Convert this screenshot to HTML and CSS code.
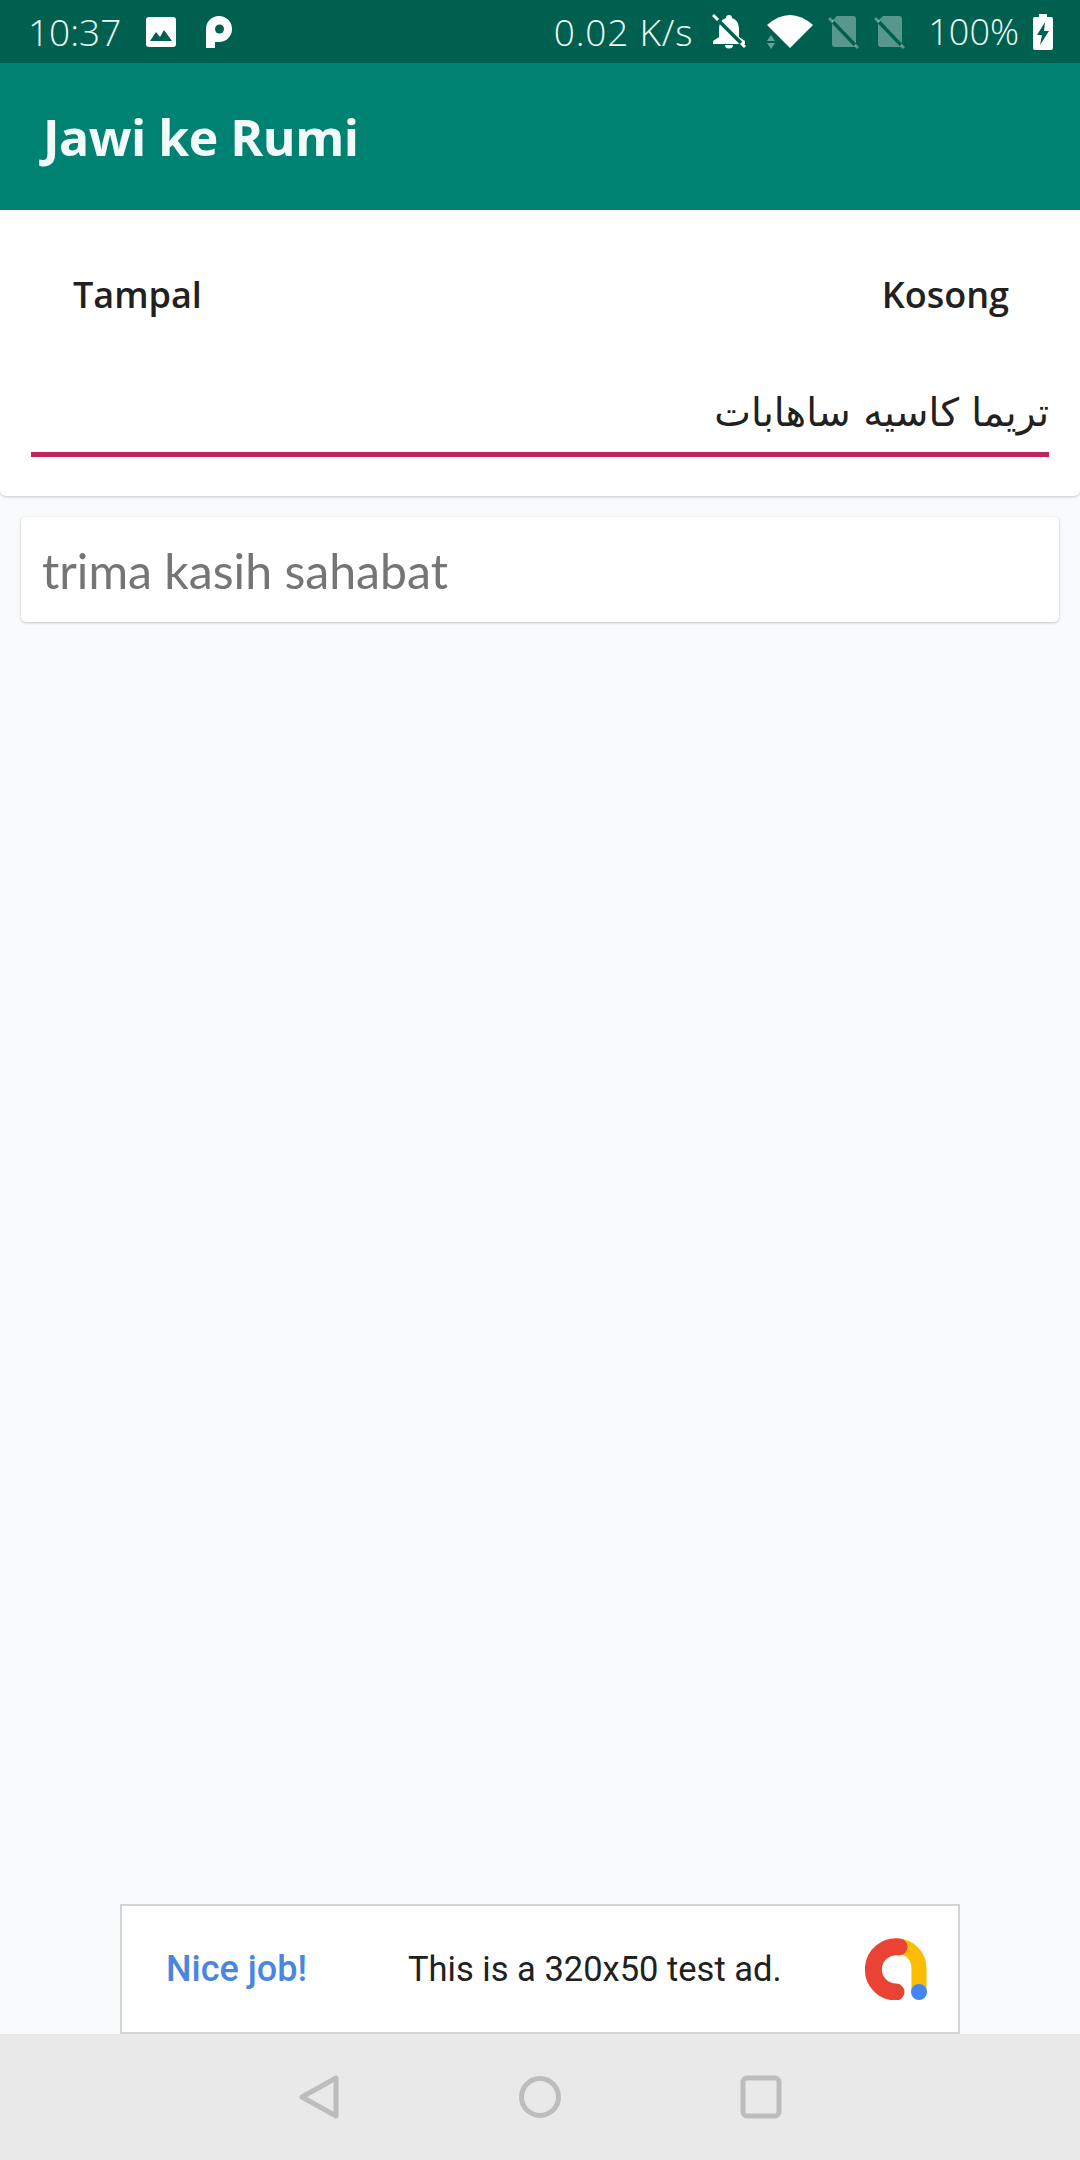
FILE: index.html
```html
<!DOCTYPE html>
<html lang="en">

<head>
    <meta charset="UTF-8">
    <meta name="viewport" content="width=device-width, initial-scale=1.0">
    <title>Jawi ke Rumi</title>
    <link rel="stylesheet" href="styles.css">
</head>

<body>
    <div class="phone">
        <!-- Status bar -->
        <div class="status-bar">
            <div class="status-left">
                <span class="clock">10:37</span>
                <svg class="icon-picture" width="30" height="30" viewBox="0 0 30 30">
                    <rect width="30" height="30" rx="3" fill="#fff"/>
                    <path d="M4 24 L10 15 L14 20 L18 13 L26 24 Z" fill="#00604f"/>
                </svg>
                <svg class="icon-p" width="27" height="32" viewBox="0 0 27 32">
                    <path d="M0 13 A13 13 0 1 1 13 26 H9 V32 H0 Z" fill="#fff"/>
                    <circle cx="13.500" cy="13" r="4.500" fill="#00604f"/>
                </svg>
            </div>
            <div class="status-right">
                <span class="speed">0.02 K/s</span>
                <svg class="icon-bell" width="34" height="35" viewBox="0 0 34 35">
                    <path d="M17 1 A3 3 0 0 1 20 4 C26 6 27 11 27 17 V23 L33 27 V30 H1 V27 L7 23 V17 C7 11 8 6 14 4 A3 3 0 0 1 17 1 Z" fill="#fff"/>
                    <path d="M13 31 H21 A4 3.500 0 0 1 13 31 Z" fill="#fff"/>
                    <path d="M1 1 L33 33" stroke="#fff" stroke-width="3"/>
                    <path d="M6 6 L29 29" stroke="#00604f" stroke-width="3.500"/>
                </svg>
                <svg class="icon-wifi" width="46" height="34" viewBox="0 0 46 34">
                    <path d="M0 10 Q23 -10 46 10 L23 33 Z" fill="#fff"/>
                    <path d="M0 26 L4 20 L8 26 Z M0 28 H8 L4 34 Z" fill="#fff" opacity="0.4"/>
                </svg>
                <svg class="icon-sim" width="31" height="34" viewBox="0 0 31 34">
                    <path d="M9 1 H25 A3 3 0 0 1 28 4 V29 A3 3 0 0 1 25 32 H7 A3 3 0 0 1 4 29 V6 Z" fill="#fff" opacity="0.35"/>
                    <path d="M1 3 L30 33" stroke="#fff" stroke-width="3" opacity="0.35"/>
                    <path d="M5 7 L27 30" stroke="#00604f" stroke-width="3.500"/>
                </svg>
                <svg class="icon-sim" width="31" height="34" viewBox="0 0 31 34">
                    <path d="M9 1 H25 A3 3 0 0 1 28 4 V29 A3 3 0 0 1 25 32 H7 A3 3 0 0 1 4 29 V6 Z" fill="#fff" opacity="0.35"/>
                    <path d="M1 3 L30 33" stroke="#fff" stroke-width="3" opacity="0.35"/>
                    <path d="M5 7 L27 30" stroke="#00604f" stroke-width="3.500"/>
                </svg>
                <span class="battery-text">100%</span>
                <svg class="icon-battery" width="20" height="36" viewBox="0 0 20 36">
                    <path d="M6 0 H14 V3 H18 A2 2 0 0 1 20 5 V34 A2 2 0 0 1 18 36 H2 A2 2 0 0 1 0 34 V5 A2 2 0 0 1 2 3 H6 Z" fill="#fff"/>
                    <path d="M12 8 L4 21 H9 L7 31 L16 17 H11 Z" fill="#00604f"/>
                </svg>
            </div>
        </div>

        <!-- App bar -->
        <header class="app-bar">
            <h1>Jawi ke Rumi</h1>
        </header>

        <!-- Input card -->
        <section class="input-card">
            <div class="actions">
                <button class="text-btn">Tampal</button>
                <button class="text-btn">Kosong</button>
            </div>
            <div class="jawi-input" dir="rtl" lang="ar">تريما كاسيه ساهابات</div>
        </section>

        <!-- Result -->
        <section class="result-card">trima kasih sahabat</section>

        <div class="spacer"></div>

        <!-- Test ad -->
        <div class="ad-banner">
            <span class="ad-title">Nice job!</span>
            <span class="ad-text">This is a 320x50 test ad.</span>
            <svg class="ad-logo" width="64" height="62" viewBox="0 0 64 62">
                <path d="M33 8 A22 22 0 0 1 55 30 V54" fill="none" stroke="#fbbc04" stroke-width="15"/>
                <path d="M35 9 A22.600 22.600 0 1 0 32 54" fill="none" stroke="#ea4335" stroke-width="17" stroke-linecap="round"/>
                <circle cx="55" cy="54" r="8" fill="#4285f4"/>
            </svg>
        </div>

        <!-- Nav bar -->
        <nav class="nav-bar">
            <svg width="42" height="44" viewBox="0 0 42 44">
                <path d="M38 3 V41 L4 22 Z" fill="none" stroke="#bdbdbd" stroke-width="5" stroke-linejoin="round"/>
            </svg>
            <svg width="42" height="44" viewBox="0 0 42 44">
                <circle cx="21" cy="22" r="18.500" fill="none" stroke="#bdbdbd" stroke-width="5"/>
            </svg>
            <svg width="42" height="44" viewBox="0 0 42 44">
                <rect x="3" y="3" width="36" height="38" rx="4" fill="none" stroke="#bdbdbd" stroke-width="5"/>
            </svg>
        </nav>
    </div>
</body>

</html>
```

FILE: styles.css
```css
/* General Styles */
body {
    margin: 0;
    padding: 0;
    background-color: #f9fafb;
    font-family: "Open Sans", "Noto Sans", sans-serif;
}

.phone {
    display: flex;
    flex-direction: column;
    width: 1080px;
    height: 2160px;
    overflow: hidden;
}

/* Status bar */
.status-bar {
    display: flex;
    justify-content: space-between;
    align-items: center;
    height: 63px;
    padding: 0 27px 0 28px;
    background-color: #00604f;
    color: #f0fbf8;
    font-family: "Open Sans", sans-serif;
    font-size: 36px;
    font-weight: 300;
    flex-shrink: 0;
}

.status-left,
.status-right {
    display: flex;
    align-items: center;
}

.clock {
    font-size: 37px;
}

.speed {
    font-size: 37px;
    letter-spacing: 0.8px;
}

.icon-picture {
    margin-left: 25px;
}

.icon-p {
    margin-left: 30px;
}

.icon-bell {
    margin-left: 19px;
}

.icon-wifi {
    margin-left: 21px;
}

.icon-sim {
    margin-left: 15px;
}

.battery-text {
    margin-left: 23px;
}

.icon-battery {
    margin-left: 14px;
}

/* App bar */
.app-bar {
    display: flex;
    align-items: center;
    height: 147px;
    padding: 0 43px;
    background-color: #008272;
    flex-shrink: 0;
}

.app-bar h1 {
    margin: 0;
    color: #f2fbf9;
    font-size: 50px;
    font-weight: 700;
    letter-spacing: -0.5px;
}

/* Input card */
.input-card {
    height: 286px;
    padding: 0 31px;
    box-sizing: border-box;
    background-color: #ffffff;
    border-radius: 0 0 6px 6px;
    box-shadow: 0 1px 3px rgba(0, 0, 0, 0.2);
    flex-shrink: 0;
}

.actions {
    display: flex;
    justify-content: space-between;
    align-items: center;
    height: 168px;
    padding: 0 40px 0 42px;
}

.text-btn {
    padding: 0;
    border: none;
    background: none;
    color: #212121;
    font-family: "Open Sans", sans-serif;
    font-size: 36px;
    font-weight: 600;
}

.jawi-input {
    height: 79px;
    box-sizing: border-box;
    border-bottom: 5px solid #c2255c;
    color: #212121;
    font-family: "DejaVu Sans", sans-serif;
    font-size: 39px;
    line-height: 70px;
}

/* Result */
.result-card {
    display: flex;
    align-items: center;
    height: 105px;
    margin: 21px 21px 0;
    padding: 0 21px;
    background-color: #ffffff;
    border-radius: 5px;
    box-shadow: 0 1px 3px rgba(0, 0, 0, 0.22);
    color: #757575;
    font-family: "Lato", sans-serif;
    font-size: 48.200px;
    flex-shrink: 0;
}

.spacer {
    flex: 1;
}

/* Test ad */
.ad-banner {
    display: flex;
    align-items: center;
    width: 840px;
    height: 130px;
    box-sizing: border-box;
    margin: 0 auto;
    padding: 0 30px 0 44px;
    background-color: #ffffff;
    border: 2px solid #d2d4d6;
    font-family: "Roboto", sans-serif;
    font-size: 34.500px;
    flex-shrink: 0;
}

.ad-title {
    width: 242px;
    color: #4a86e0;
    font-size: 36px;
    font-weight: 500;
}

.ad-text {
    flex: 1;
    color: #212121;
}

/* Nav bar */
.nav-bar {
    display: flex;
    justify-content: center;
    gap: 179px;
    align-items: center;
    height: 126px;
    background-color: #e9e9ea;
    flex-shrink: 0;
}
```
